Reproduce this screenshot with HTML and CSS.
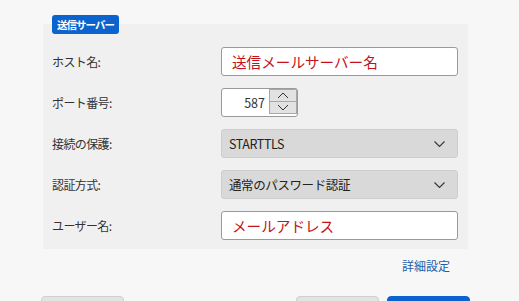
FILE: index.html
```html
<!DOCTYPE html>
<html lang="ja">
<head>
    <meta charset="UTF-8">
    <title>送信サーバー</title>
    <link rel="stylesheet" href="styles.css">
</head>
<body>
    <div class="dialog">
        <div class="group">
            <span class="badge">送信サーバー</span>
            <div class="form">
                <label class="label">ホスト名:</label>
                <div class="field text">送信メールサーバー名</div>

                <label class="label">ポート番号:</label>
                <div class="port">
                    <div class="port-value">587</div>
                    <div class="spin">
                        <button class="spin-btn">
                            <svg width="12" height="7" viewBox="0 0 12 7"><path d="M1 6 L6 1 L11 6" fill="none" stroke="#333" stroke-width="1"/></svg>
                        </button>
                        <button class="spin-btn">
                            <svg width="12" height="7" viewBox="0 0 12 7"><path d="M1 1 L6 6 L11 1" fill="none" stroke="#333" stroke-width="1"/></svg>
                        </button>
                    </div>
                </div>

                <label class="label">接続の保護:</label>
                <div class="field select">
                    <span>STARTTLS</span>
                    <svg width="11" height="6" viewBox="0 0 11 6"><path d="M0.5 0.5 L5.5 5.5 L10.5 0.5" fill="none" stroke="#333" stroke-width="1.1"/></svg>
                </div>

                <label class="label">認証方式:</label>
                <div class="field select">
                    <span>通常のパスワード認証</span>
                    <svg width="11" height="6" viewBox="0 0 11 6"><path d="M0.5 0.5 L5.5 5.5 L10.5 0.5" fill="none" stroke="#333" stroke-width="1.1"/></svg>
                </div>

                <label class="label">ユーザー名:</label>
                <div class="field text">メールアドレス</div>
            </div>
        </div>

        <div class="links">
            <a href="#" class="more">詳細設定</a>
        </div>

        <div class="actions">
            <button class="btn"></button>
            <div class="actions-right">
                <button class="btn"></button>
                <button class="btn primary"></button>
            </div>
        </div>
    </div>
</body>
</html>
```

FILE: styles.css
```css
body {
    margin: 0;
    background-color: #f7f7f7;
    font-family: "Noto Sans CJK JP", "Noto Sans", sans-serif;
    color: #333;
    overflow: hidden;
}
.dialog {
    padding: 24px 0 0 43px;
    width: 427px;
}
.group {
    position: relative;
    background-color: #f0f0f0;
    width: 425px;
    padding: 23px 10px 9px 9px;
    box-sizing: border-box;
}
.badge {
    position: absolute;
    top: -9px;
    left: 9px;
    background-color: #0b63ce;
    color: white;
    font-size: 10.5px;
    font-weight: bold;
    line-height: 19px;
    padding: 0 5px;
    border-radius: 3px;
    letter-spacing: -1px;
}
.form {
    display: grid;
    grid-template-columns: 169px 1fr;
    grid-auto-rows: 29px;
    row-gap: 12px;
    align-items: center;
}
.label {
    font-size: 12px;
    letter-spacing: -0.6px;
    color: #333;
}
.field {
    height: 29px;
    box-sizing: border-box;
    border-radius: 3px;
    display: flex;
    align-items: center;
}
.text {
    background-color: white;
    border: 1px solid #9a9a9a;
    color: #c3121b;
    font-size: 14.6px;
    padding-left: 10px;
}
.select {
    background-color: #d9d9d9;
    border: 1px solid #cdcdcd;
    font-size: 12.5px;
    letter-spacing: -0.4px;
    padding: 0 12px 0 7px;
    justify-content: space-between;
    color: #222;
}
.port {
    display: flex;
    width: 77px;
    height: 29px;
    box-sizing: border-box;
    border: 1px solid #9a9a9a;
    border-radius: 3px;
    background-color: white;
}
.port-value {
    flex: 1;
    font-size: 12.5px;
    display: flex;
    align-items: center;
    justify-content: flex-end;
    padding-right: 4px;
}
.spin {
    display: flex;
    flex-direction: column;
    width: 28px;
    padding-bottom: 2px;
}
.spin-btn {
    flex: 1;
    margin: 0;
    padding: 0;
    border: 1px solid #a8a8a8;
    background-color: #e2e2e2;
    display: flex;
    align-items: center;
    justify-content: center;
}
.spin-btn + .spin-btn {
    border-top: none;
}
.links {
    display: flex;
    justify-content: flex-end;
    padding: 8px 20px 0 0;
}
.more {
    font-size: 12px;
    color: #1d5fa6;
    text-decoration: none;
    line-height: 18px;
}
.actions {
    display: flex;
    justify-content: space-between;
    margin: 21px 0 0 -2px;
}
.actions-right {
    display: flex;
    gap: 8px;
}
.btn {
    width: 83px;
    height: 28px;
    border: 1px solid #cfcfcf;
    border-radius: 4px;
    background-color: #e3e3e3;
}
.primary {
    background-color: #0a63ce;
    border-color: #0a63ce;
}
```
